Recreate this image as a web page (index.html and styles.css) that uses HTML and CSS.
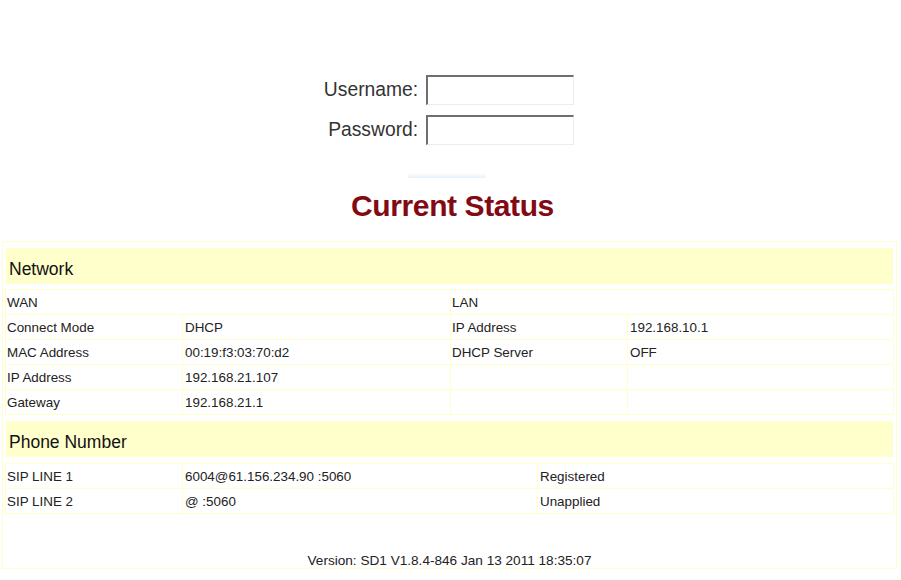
FILE: index.html
```html
<!DOCTYPE html>
<html>
<head>
<meta charset="utf-8">
<title>Current Status</title>
<link rel="stylesheet" href="styles.css">
</head>
<body>
<div class="login">
  <label class="lbl" for="u">Username:</label><input class="field" id="u" type="text">
  <label class="lbl" for="p">Password:</label><input class="field" id="p" type="password">
</div>
<div class="btn"></div>
<h1 class="title">Current Status</h1>
<div class="panel">
  <div class="section">Network</div>
  <table class="grid">
    <colgroup><col class="c1"><col class="c2"><col class="c3"><col class="c4"></colgroup>
    <tr><td colspan="2">WAN</td><td colspan="2">LAN</td></tr>
    <tr><td>Connect Mode</td><td class="v">DHCP</td><td>IP Address</td><td class="v">192.168.10.1</td></tr>
    <tr><td>MAC Address</td><td class="v">00:19:f3:03:70:d2</td><td>DHCP Server</td><td class="v">OFF</td></tr>
    <tr><td>IP Address</td><td class="v">192.168.21.107</td><td></td><td></td></tr>
    <tr><td>Gateway</td><td class="v">192.168.21.1</td><td></td><td></td></tr>
  </table>
  <div class="section second">Phone Number</div>
  <table class="grid">
    <colgroup><col class="p1"><col class="p2"><col class="p3"></colgroup>
    <tr><td>SIP LINE 1</td><td class="v">6004@61.156.234.90 :5060</td><td class="v">Registered</td></tr>
    <tr><td>SIP LINE 2</td><td class="v">@ :5060</td><td class="v">Unapplied</td></tr>
  </table>
  <div class="version">Version: SD1 V1.8.4-846 Jan 13 2011 18:35:07</div>
</div>
</body>
</html>
```
FILE: styles.css
```css
html, body {
  margin: 0;
  padding: 0;
  background: #ffffff;
}
body {
  font-family: "Liberation Sans", Arial, sans-serif;
  color: #222;
}
.login {
  display: grid;
  grid-template-columns: auto auto;
  justify-content: center;
  align-items: center;
  column-gap: 8px;
  row-gap: 10px;
  padding-top: 75px;
  margin-left: -3px;
}
.lbl {
  font-size: 19.3px;
  color: #333;
  text-align: right;
}
.field {
  box-sizing: border-box;
  width: 148px;
  height: 30px;
  margin: 0;
  padding: 0;
  background: #fff;
  border-top: 2px solid #6f6f6f;
  border-left: 2px solid #6f6f6f;
  border-right: 1px solid #ececec;
  border-bottom: 1px solid #ececec;
}
.btn {
  width: 78px;
  height: 4px;
  margin: 29px 0 0 408px;
  background: linear-gradient(#fbfdff, #e4f1fb);
}
.title {
  margin: 11px 0 0 0;
  text-align: center;
  font-size: 30px;
  line-height: 34px;
  letter-spacing: -0.4px;
  font-weight: bold;
  color: #820a14;
  padding-left: 4px;
}
.panel {
  box-sizing: border-box;
  width: 895px;
  margin: 18px 0 0 2px;
  border: 1px solid #ffffcc;
  padding: 6px 2px 1px 2px;
}
.section {
  margin: 0 1px 5px 1px;
  height: 36px;
  line-height: 42px;
  padding-left: 3px;
  background: #ffffcc;
  font-size: 17.5px;
  color: #111;
}
.section.second {
  margin-top: 6px;
  margin-bottom: 6px;
}
.grid {
  width: 889px;
  border-collapse: collapse;
  table-layout: fixed;
  font-size: 13.4px;
}
.grid td {
  height: 24px;
  padding: 0 0 0 1px;
  border: 1px solid #ffffcc;
  color: #222;
  white-space: nowrap;
}
.grid td.v {
  padding-left: 2px;
}
.c1 { width: 177px; }
.c2 { width: 268px; }
.c3 { width: 177px; }
.p1 { width: 177px; }
.p2 { width: 355px; }
.version {
  text-align: center;
  font-size: 13.6px;
  line-height: 13px;
  padding-top: 40px;
  color: #222;
}
```
